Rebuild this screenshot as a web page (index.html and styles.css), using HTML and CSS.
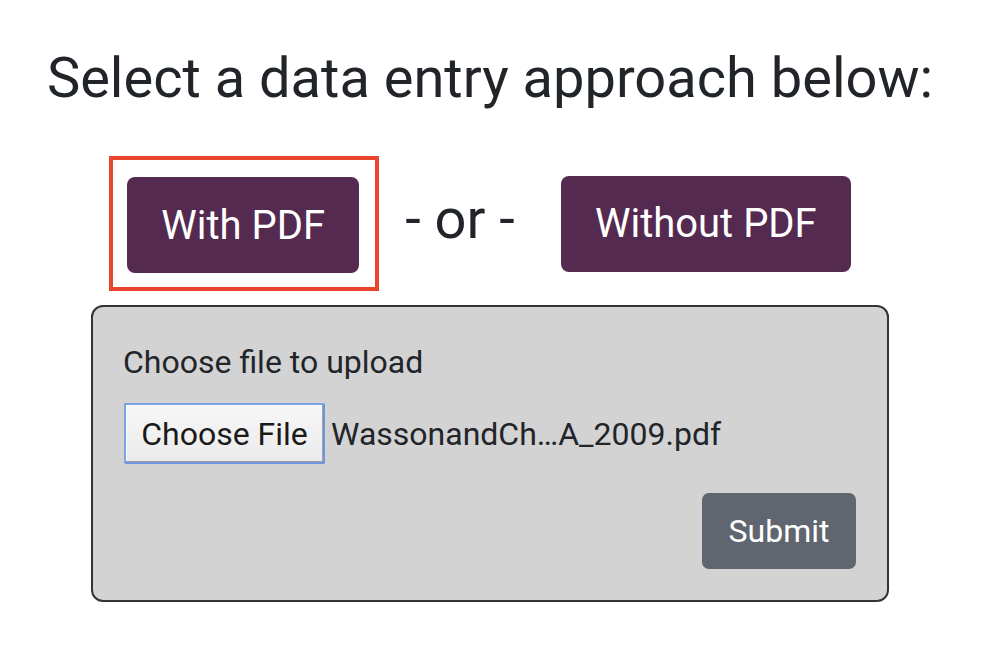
FILE: index.html
```html
<!DOCTYPE html>
<html>
<head>
<meta charset="utf-8">
<link rel="stylesheet" href="styles.css">
</head>
<body>
<div class="page">
  <h1 class="title">Select a data entry approach below:</h1>
  <div class="choices">
    <div class="highlight">
      <button class="btn-primary">With PDF</button>
    </div>
    <span class="or">- or -</span>
    <button class="btn-primary btn-wide">Without PDF</button>
  </div>
  <form class="upload">
    <label class="upload-label">Choose file to upload</label>
    <div class="file-row">
      <button type="button" class="file-btn">Choose File</button>
      <span class="file-name">WassonandCh…A_2009.pdf</span>
    </div>
    <div class="submit-row">
      <button type="button" class="btn-submit">Submit</button>
    </div>
  </form>
</div>
</body>
</html>
```
FILE: styles.css
```css
html, body {
  margin: 0;
  padding: 0;
  background: #ffffff;
}
body {
  font-family: Roboto, "Liberation Sans", sans-serif;
  color: #212529;
}
.page {
  width: 982px;
  display: flex;
  flex-direction: column;
  align-items: center;
}
.title {
  margin: 45px 2px 0 0;
  font-size: 56px;
  font-weight: 400;
  line-height: 66px;
}
.choices {
  margin-top: 45px;
  margin-right: 22px;
  display: flex;
  align-items: center;
}
.highlight {
  border: 4px solid #e8452c;
  padding: 16px 16px 14px 14px;
}
.btn-primary {
  font-family: Roboto, "Liberation Sans", sans-serif;
  background: #552a50;
  color: #ffffff;
  border: none;
  border-radius: 8px;
  width: 232px;
  height: 96px;
  font-size: 40px;
  padding: 0;
  margin-top: 1px;
}
.btn-wide {
  width: 290px;
  margin-top: 0;
}
.or {
  font-size: 56px;
  line-height: 66px;
  margin: 0 46px 10px 26px;
}
.upload {
  margin-top: 14px;
  margin-right: 2px;
  width: 798px;
  height: 297px;
  box-sizing: border-box;
  background: #d3d3d3;
  border: 2px solid #343434;
  border-radius: 12px;
  padding: 36px 31px 0 30px;
  display: flex;
  flex-direction: column;
}
.upload-label {
  font-size: 32px;
  line-height: 38px;
}
.file-row {
  margin-top: 22px;
  display: flex;
  align-items: center;
}
.file-btn {
  font-family: Roboto, "Liberation Sans", sans-serif;
  font-size: 32px;
  color: #1a1a1a;
  width: 201px;
  height: 61px;
  box-sizing: border-box;
  background: linear-gradient(#f7f7f7, #ebebeb);
  border: 2px solid #7ea2e2;
  border-right-color: #6f95dc;
  border-bottom-color: #6f95dc;
  box-shadow: inset -1px -1px 0 #a0a0a0, inset 1px 1px 0 #fbfbfb;
  border-radius: 2px;
  padding: 0;
  margin-left: 1px;
}
.file-name {
  margin-left: 6px;
  font-size: 32px;
}
.submit-row {
  margin-top: 29px;
  display: flex;
  justify-content: flex-end;
}
.btn-submit {
  font-family: Roboto, "Liberation Sans", sans-serif;
  background: #5f6670;
  color: #ffffff;
  border: none;
  border-radius: 7px;
  width: 154px;
  height: 76px;
  font-size: 32px;
  padding: 0;
}
```
